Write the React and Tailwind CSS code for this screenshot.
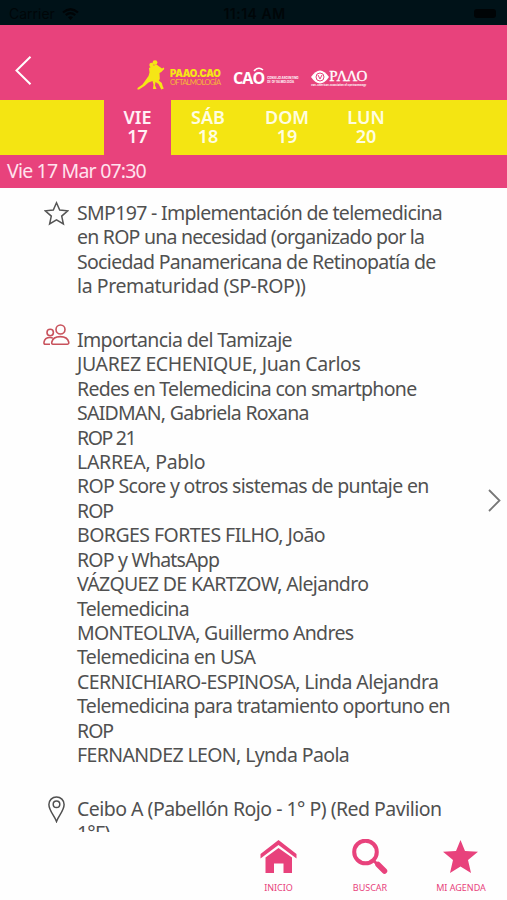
const days = [
  { name: "VIE", number: 17, active: true },
  { name: "SÁB", number: 18 },
  { name: "DOM", number: 19 },
  { name: "LUN", number: 20 },
];

const title = [
  { text: "SMP197 - Implementación de telemedicina", spacing: "tracking-[-0.67px]" },
  { text: "en ROP una necesidad (organizado por la", spacing: "tracking-[-0.78px]" },
  { text: "Sociedad Panamericana de Retinopatía de", spacing: "tracking-[-0.69px]" },
  { text: "la Prematuridad (SP-ROP))", spacing: "tracking-[-0.4px]" },
];

const talks = [
  { text: "Importancia del Tamizaje", spacing: "tracking-[-0.62px]" },
  { text: "JUAREZ ECHENIQUE, Juan Carlos", spacing: "tracking-[-0.38px]" },
  { text: "Redes en Telemedicina con smartphone", spacing: "tracking-[-0.7px]" },
  { text: "SAIDMAN, Gabriela Roxana", spacing: "tracking-[-0.73px]" },
  { text: "ROP 21", spacing: "tracking-[-1.4px]" },
  { text: "LARREA, Pablo", spacing: "tracking-[-0.3px]" },
  { text: "ROP Score y otros sistemas de puntaje en", spacing: "tracking-[-0.69px]" },
  { text: "ROP", spacing: "tracking-[-1px]" },
  { text: "BORGES FORTES FILHO, João", spacing: "tracking-[-0.55px]" },
  { text: "ROP y WhatsApp", spacing: "tracking-[-0.78px]" },
  { text: "VÁZQUEZ DE KARTZOW, Alejandro", spacing: "tracking-[-0.64px]" },
  { text: "Telemedicina", spacing: "tracking-[-0.68px]" },
  { text: "MONTEOLIVA, Guillermo Andres", spacing: "tracking-[-0.67px]" },
  { text: "Telemedicina en USA", spacing: "tracking-[-0.65px]" },
  { text: "CERNICHIARO-ESPINOSA, Linda Alejandra", spacing: "tracking-[-0.56px]" },
  { text: "Telemedicina para tratamiento oportuno en", spacing: "tracking-[-0.67px]" },
  { text: "ROP", spacing: "tracking-[-1px]" },
  { text: "FERNANDEZ LEON, Lynda Paola", spacing: "tracking-[-0.61px]" },
];

const place = [
  { text: "Ceibo A (Pabellón Rojo - 1° P) (Red Pavilion", spacing: "tracking-[-0.52px]" },
  { text: "1°F)", spacing: "tracking-[-0.8px]" },
];

function Lines({ lines }) {
  return (
    <div className="text-[19.5px] leading-[24.43px] whitespace-nowrap text-[#505050]">
      {lines.map((line, i) => (
        <div key={i} className={line.spacing}>{line.text}</div>
      ))}
    </div>
  );
}

function StatusBar() {
  return (
    <div className="grid h-[25px] grid-cols-3 items-center bg-[#001218] pt-[2px] pr-[11px] pl-[9px] font-[Inter] text-[14px] text-[#000608]">
      <div className="flex items-center gap-[7px]">
        Carrier
        <svg width="17" height="12" viewBox="0 0 17 12" fill="none" stroke="#000406" strokeWidth="2.2">
          <path d="M1 4.5Q8.5-2 16 4.5M3.8 7.2q4.7-4 9.4 0" />
          <path d="M6 9.2q2.5-2 5 0L8.5 12Z" fill="#000406" stroke="none" />
        </svg>
      </div>
      <div className="pl-1 text-center font-semibold tracking-[0.5px] whitespace-nowrap">11:14 AM</div>
      <div className="h-[9px] w-[22px] justify-self-end rounded-[3px] bg-[#000406]" />
    </div>
  );
}

function Logos() {
  return (
    <div className="flex h-[30px] items-center text-white">
      <svg width="28" height="30" viewBox="0 0 28 30" fill="#f5e616">
        <circle cx="18" cy="2.600" r="2.400" />
        <circle cx="14.500" cy="5" r="2.200" />
        <path d="M12 8l3.500-2 4-1.500 2 1.500 3.500 2.500 1.800-1 .5 1.500-3 3-1.800 1 .3 6-1 1.500 3 2.500 1 3.500 1 2-2.500 1-2.800-5.500-3-2-.5 3.500 1.500 3.500H16l.5-4.500-1-3.500-4 1.500-4 3.500-5.500 3.500-1.500 0 0-1.500 5-3.500 6-8.500 1-3.500Z" />
      </svg>
      <div className="mt-[5px] ml-[5px] w-[51px] text-[#f5e616]">
        <div className="font-[Inter] text-[9.7px] leading-[9px] font-black tracking-[-0.25px]">PAAO.CAO</div>
        <div className="font-[Lato] text-[7.6px] leading-[8px] tracking-[-0.72px] text-[#f5b43a]">OFTALMOLOGÍA</div>
      </div>
      <div className="relative mt-[5px] ml-[12px] font-['Open_Sans'] text-[16px] leading-[16px] font-bold tracking-[-0.9px]">
        CAO
        <svg className="absolute -top-[3px] right-0" width="11" height="5" fill="none" stroke="white" strokeWidth="1.6">
          <path d="M1 4Q5.5-1 10 3" />
        </svg>
      </div>
      <div className="mt-[11px] ml-[3px] w-[32px] font-[Inter] text-[2.8px] leading-[3.2px] font-bold whitespace-nowrap">
        <div>CONSEJO ARGENTINO</div>
        <div>DE OFTALMOLOGÍA</div>
      </div>
      <div className="mt-[6px] ml-[12px] w-[57px]">
        <div className="flex items-center">
          <svg width="18" height="14" viewBox="0 0 18 14">
            <path d="M0 7Q9-6 18 7 9 20 0 7Z" fill="white" />
            <circle cx="9" cy="7" r="4" fill="none" stroke="#e8427c" strokeWidth="1" />
            <path d="M7 5l2 4 2-4" fill="none" stroke="#e8427c" />
          </svg>
          <span className="font-[Liberation_Serif] text-[15px] leading-[13px] tracking-[-1px] [-webkit-text-stroke:0.3px_white]">PΛΛO</span>
        </div>
        <div className="font-[Inter] text-[2.5px] leading-[3px] font-bold whitespace-nowrap">Pan-American Association of Ophthalmology</div>
      </div>
    </div>
  );
}

function TabBar() {
  return (
    <div className="flex h-[68px] shrink-0 justify-end bg-[#fefefe] pr-[1px] text-center text-[9px] leading-[12px] text-[#e8427c]">
      <div className="flex w-[91px] flex-col items-center pt-[7px]">
        <svg width="37" height="35" viewBox="0 0 37 35" fill="currentColor">
          <path d="M.5 15L18.500 1 36.500 15v4.500L18.500 6 .5 19.500Z" />
          <path d="M5.500 18.500L18.500 9 32 18.500V34H23.500v-9.500h-9.500V34H5.500Z" />
        </svg>
        <span className="mt-[8px]">INICIO</span>
      </div>
      <div className="flex w-[91px] flex-col items-center pt-[7px]">
        <svg width="37" height="35" viewBox="0 0 37 35" fill="none" stroke="currentColor">
          <circle cx="14.500" cy="13" r="11.300" strokeWidth="4" />
          <path d="M23 22l3 3" strokeWidth="3" />
          <path d="M27 25.500l6.500 6.500" strokeWidth="5.500" strokeLinecap="round" />
        </svg>
        <span className="mt-[8px] pl-[1px]">BUSCAR</span>
      </div>
      <div className="flex w-[91px] flex-col items-center pt-[7px]">
        <svg width="37" height="35" viewBox="0 0 37 35" fill="currentColor">
          <path d="M18.500 1l4.500 11 13 .7-10 8.300 3 13-10.500-6.500L8 34l3-13L1 12.700l13-.7Z" />
        </svg>
        <span className="mt-[8px] pl-[1px]">MI AGENDA</span>
      </div>
    </div>
  );
}

export default function App() {
  return (
    <div className="flex h-[900px] w-[507px] flex-col overflow-hidden bg-[#fefefe] font-['Noto_Sans',sans-serif]">
      <StatusBar />
      <header className="flex h-[75px] items-end bg-[#e8427c] pb-[10px] pl-[15px]">
        <svg className="mb-[5px]" width="17" height="29" viewBox="0 0 17 29" fill="none" stroke="white" strokeWidth="2">
          <path d="M15.500.8L1.500 14.500l14 13.700" />
        </svg>
        <div className="ml-[105px]">
          <Logos />
        </div>
      </header>
      <nav className="flex h-[55px] bg-[#f4e512] pl-[104px]">
        {days.map((day) => (
          <div
            key={day.number}
            className={
              day.active
                ? "w-[67px] bg-[#e8427c] pt-[8px] text-center text-[18px] leading-[19px] font-semibold text-[#fff0f5]"
                : "mr-[5px] w-[74px] pt-[8px] text-center text-[18px] leading-[19px] font-semibold text-[#fffde0]"
            }
          >
            <div>{day.name}</div>
            <div>{day.number}</div>
          </div>
        ))}
      </nav>
      <div className="h-[33px] bg-[#e8427c] pl-[7px] text-[19.5px] leading-[31px] tracking-[-0.8px] text-[#ffe3ee]">Vie 17 Mar 07:30</div>

      <main className="flex min-h-0 flex-1 overflow-hidden">
        <div className="pt-[13px]">
          <section className="flex pl-[44px]">
            <svg className="mr-[8px]" width="25" height="25" viewBox="0 0 25 25" fill="none" stroke="#555" strokeWidth="1.500">
              <path d="M12.500 1.800l3.200 7.200 8 .8-6 5.300 1.700 7.900-6.900-4.100L5.600 23l1.700-7.900-6-5.300 8-.8Z" />
            </svg>
            <Lines lines={title} />
          </section>
          <section className="mt-[29px] flex pl-[43px]">
            <svg className="-mt-[4px] mr-[7px]" width="27" height="22" viewBox="0 0 27 22" fill="none" stroke="#c8525c" strokeWidth="1.600">
              <circle cx="17.500" cy="5.500" r="4.500" />
              <circle cx="7.200" cy="8.500" r="3.200" />
              <path d="M10 20.200c-1.400 0-1.400-1-1.200-2.200.8-3.800 4.200-5.400 8.400-5.400s7.700 1.600 8.500 5.400c.2 1.200.1 2.200-1.200 2.200ZM7 20.200H2.500c-1.400 0-1.700-.7-1.500-2 .5-3 2.700-4.700 6-4.700 1.200 0 2 .2 2.800.6" />
            </svg>
            <Lines lines={talks} />
          </section>
          <section className="mt-[29px] flex pl-[48px]">
            <svg className="-mt-[1px] mr-[12px]" width="17" height="27" viewBox="0 0 17 27" fill="none" stroke="#505050" strokeWidth="1.500">
              <path d="M8.500 25.500C6.500 20 .9 14.500.9 8.500a7.600 7.600 0 0 1 15.200 0c0 6-5.600 11.500-7.600 17Z" />
              <circle cx="8.500" cy="8.300" r="3.300" />
            </svg>
            <Lines lines={place} />
          </section>
        </div>
        <svg className="mt-[301px] mr-[6px] ml-auto shrink-0" width="13" height="23" viewBox="0 0 13 23" fill="none" stroke="#777" strokeWidth="1.800">
          <path d="M1 1l10.500 10.500L1 22" />
        </svg>
      </main>
      <TabBar />
    </div>
  );
}
